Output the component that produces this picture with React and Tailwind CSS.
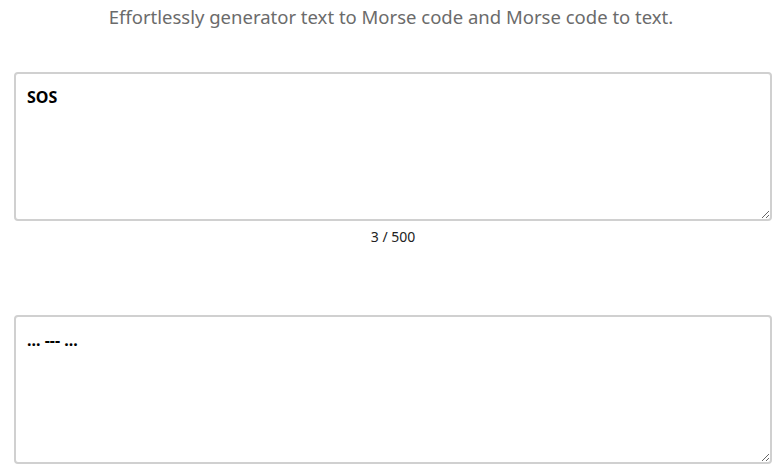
import React, { useState } from 'react';

const MORSE = {
  A: '.-', B: '-...', C: '-.-.', D: '-..', E: '.', F: '..-.', G: '--.', H: '....', I: '..', J: '.---',
  K: '-.-', L: '.-..', M: '--', N: '-.', O: '---', P: '.--.', Q: '--.-', R: '.-.', S: '...', T: '-',
  U: '..-', V: '...-', W: '.--', X: '-..-', Y: '-.--', Z: '--..',
};

const toMorse = (text) =>
  text
    .toUpperCase()
    .split('')
    .map((c) => (c === ' ' ? '/' : MORSE[c] || ''))
    .filter(Boolean)
    .join(' ');

const App = () => {
  const [text, setText] = useState('SOS');

  return (
    <div className="min-h-screen bg-white font-['Noto_Sans',sans-serif]">
      <p className="pt-[4px] text-center text-[18.5px] leading-[26px] text-[#6b6b6b]">
        Effortlessly generator text to Morse code and Morse code to text.
      </p>

      <div className="mt-[42px] ml-[14px] w-[758px]">
        <textarea
          value={text}
          maxLength={500}
          onChange={(e) => setText(e.target.value)}
          className="block h-[149px] w-full rounded-[4px] border-2 border-[#d0d0d0] px-[11px] py-[11px] text-[16px] font-bold leading-[24px] text-black outline-none"
        />
        <div className="mt-[6px] text-center text-[14px] leading-[20px] text-[#222]">
          {text.length} / 500
        </div>

        <textarea
          readOnly
          value={toMorse(text)}
          className="mt-[68px] block h-[149px] w-full rounded-[4px] border-2 border-[#d0d0d0] px-[11px] py-[11px] text-[16px] font-bold leading-[24px] text-black outline-none"
        />
      </div>
    </div>
  );
};

export default App;
